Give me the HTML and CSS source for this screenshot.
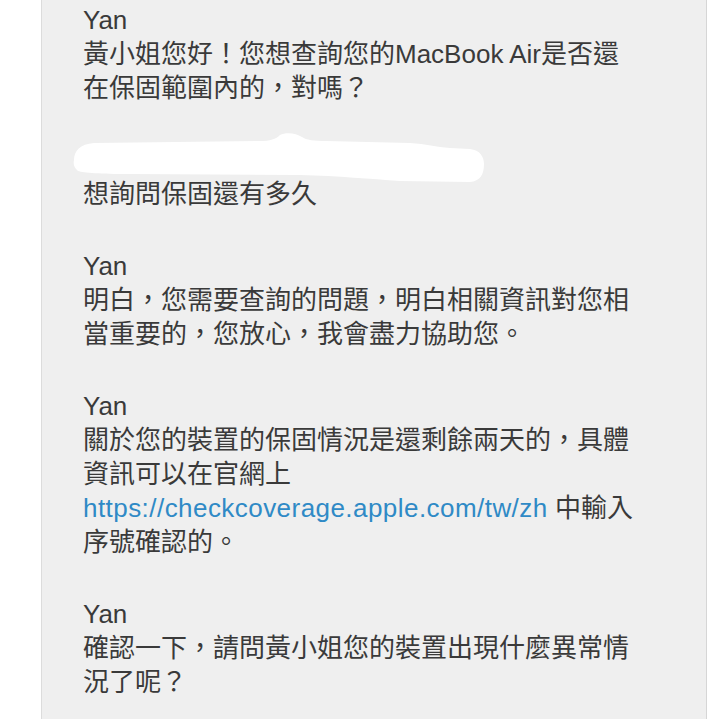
FILE: index.html
```html
<!DOCTYPE html>
<html lang="zh-Hant">
<head>
<meta charset="UTF-8">
<meta name="viewport" content="width=device-width, initial-scale=1.0">
<title>Chat transcript</title>
<link rel="stylesheet" href="styles.css">
</head>
<body>

<!-- TRANSCRIPT -->
<div class="panel">

  <div class="msg">
    <div class="name">Yan</div>
    <p>黃小姐您好！您想查詢您的MacBook Air是否還在保固範圍內的，對嗎？</p>
  </div>

  <div class="msg">
    <div class="name redact">
      <svg width="430" height="54" viewBox="0 0 430 54">
        <path d="M4 27 C4 18 10 11 24 10 L190 8 C200 8 206 6 210 2 C216 -1 226 0 232 4 C236 7 244 8 256 8 L340 10 C356 11 366 14 380 15 L400 16 C410 17 414 24 414 31 C414 42 410 48 400 49 L330 48 C300 46 270 43 230 42 L60 41 C30 41 14 40 8 38 C4 35 3 31 4 27 Z" fill="#fff"/>
      </svg>
    </div>
    <p>想詢問保固還有多久</p>
  </div>

  <div class="msg">
    <div class="name">Yan</div>
    <p>明白，您需要查詢的問題，明白相關資訊對您相當重要的，您放心，我會盡力協助您。</p>
  </div>

  <div class="msg">
    <div class="name">Yan</div>
    <p>關於您的裝置的保固情況是還剩餘兩天的，具體資訊可以在官網上 <a href="#">https://checkcoverage.apple.com/tw/zh</a> 中輸入序號確認的。</p>
  </div>

  <div class="msg">
    <div class="name">Yan</div>
    <p>確認一下，請問黃小姐您的裝置出現什麼異常情況了呢？</p>
  </div>

</div>

</body>
</html>
```

FILE: styles.css
```css
/* RESET */
*{
  margin:0;
  padding:0;
  box-sizing:border-box;
}

body{
  background:#fff;
  font-family:"Liberation Sans", "Noto Sans CJK TC", sans-serif;
  color:#3a3a3a;
  overflow:hidden;
}

/* PANEL */
.panel{
  margin-left:41px;
  width:666px;
  min-height:100vh;
  background:#efefef;
  border-left:1px solid #dcdcdc;
  border-right:1px solid #d6d6d6;
  padding:3px 0 40px 41px;
}

/* MESSAGES */
.msg{
  width:552px;
  font-size:26px;
  line-height:34px;
  margin-bottom:38px;
}

.name{
  height:34px;
}

/* white marker stroke over the customer's name */
.redact svg{
  display:block;
  transform:translate(-13px,-10px);
  filter:blur(0.6px);
}

.msg a{
  color:#2f8ac6;
  text-decoration:none;
  letter-spacing:0.45px;
}
```
